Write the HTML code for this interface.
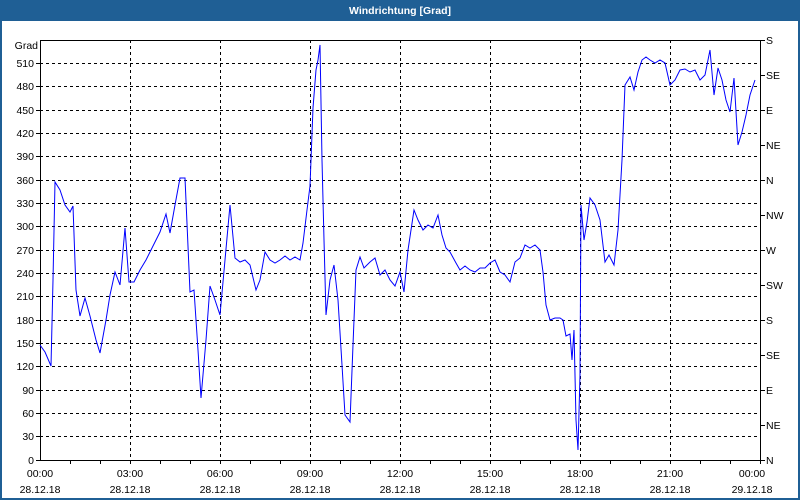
<!DOCTYPE html>
<html><head><style>
body{margin:0;width:800px;height:500px;overflow:hidden;background:#fff;font-family:"Liberation Sans",sans-serif;}
</style></head><body>
<svg width="800" height="500" xmlns="http://www.w3.org/2000/svg" style="display:block;font-family:'Liberation Sans',sans-serif;font-size:10.5px">
<rect x="0" y="0" width="800" height="500" fill="#1f5f95"/>
<rect x="2" y="21" width="796" height="477" fill="#fff"/>
<text x="400" y="14" fill="#fff" font-weight="bold" font-size="10.5" text-anchor="middle">Windrichtung [Grad]</text>
<g stroke="#000" stroke-dasharray="3,3" stroke-width="1">
<line x1="40" x2="760" y1="63.5" y2="63.5"/><line x1="40" x2="760" y1="86.5" y2="86.5"/><line x1="40" x2="760" y1="110.5" y2="110.5"/><line x1="40" x2="760" y1="133.5" y2="133.5"/><line x1="40" x2="760" y1="156.5" y2="156.5"/><line x1="40" x2="760" y1="180.5" y2="180.5"/><line x1="40" x2="760" y1="203.5" y2="203.5"/><line x1="40" x2="760" y1="226.5" y2="226.5"/><line x1="40" x2="760" y1="250.5" y2="250.5"/><line x1="40" x2="760" y1="273.5" y2="273.5"/><line x1="40" x2="760" y1="296.5" y2="296.5"/><line x1="40" x2="760" y1="320.5" y2="320.5"/><line x1="40" x2="760" y1="343.5" y2="343.5"/><line x1="40" x2="760" y1="366.5" y2="366.5"/><line x1="40" x2="760" y1="390.5" y2="390.5"/><line x1="40" x2="760" y1="413.5" y2="413.5"/><line x1="40" x2="760" y1="436.5" y2="436.5"/>
<line x1="130.5" x2="130.5" y1="40" y2="460"/><line x1="220.5" x2="220.5" y1="40" y2="460"/><line x1="310.5" x2="310.5" y1="40" y2="460"/><line x1="400.5" x2="400.5" y1="40" y2="460"/><line x1="490.5" x2="490.5" y1="40" y2="460"/><line x1="580.5" x2="580.5" y1="40" y2="460"/><line x1="670.5" x2="670.5" y1="40" y2="460"/>
</g>
<rect x="40.5" y="40.5" width="720" height="420" fill="none" stroke="#000"/>
<g stroke="#000">
<line x1="36" x2="40" y1="460.5" y2="460.5"/>
<line x1="36" x2="40" y1="63.5" y2="63.5"/><line x1="36" x2="40" y1="86.5" y2="86.5"/><line x1="36" x2="40" y1="110.5" y2="110.5"/><line x1="36" x2="40" y1="133.5" y2="133.5"/><line x1="36" x2="40" y1="156.5" y2="156.5"/><line x1="36" x2="40" y1="180.5" y2="180.5"/><line x1="36" x2="40" y1="203.5" y2="203.5"/><line x1="36" x2="40" y1="226.5" y2="226.5"/><line x1="36" x2="40" y1="250.5" y2="250.5"/><line x1="36" x2="40" y1="273.5" y2="273.5"/><line x1="36" x2="40" y1="296.5" y2="296.5"/><line x1="36" x2="40" y1="320.5" y2="320.5"/><line x1="36" x2="40" y1="343.5" y2="343.5"/><line x1="36" x2="40" y1="366.5" y2="366.5"/><line x1="36" x2="40" y1="390.5" y2="390.5"/><line x1="36" x2="40" y1="413.5" y2="413.5"/><line x1="36" x2="40" y1="436.5" y2="436.5"/>
<line x1="760" x2="765" y1="40.5" y2="40.5"/><line x1="760" x2="765" y1="75.5" y2="75.5"/><line x1="760" x2="765" y1="110.5" y2="110.5"/><line x1="760" x2="765" y1="145.5" y2="145.5"/><line x1="760" x2="765" y1="180.5" y2="180.5"/><line x1="760" x2="765" y1="215.5" y2="215.5"/><line x1="760" x2="765" y1="250.5" y2="250.5"/><line x1="760" x2="765" y1="285.5" y2="285.5"/><line x1="760" x2="765" y1="320.5" y2="320.5"/><line x1="760" x2="765" y1="355.5" y2="355.5"/><line x1="760" x2="765" y1="390.5" y2="390.5"/><line x1="760" x2="765" y1="425.5" y2="425.5"/><line x1="760" x2="765" y1="460.5" y2="460.5"/>
</g>
<g stroke="#000" id="bt">
<line x1="70.5" x2="70.5" y1="460" y2="464"/><line x1="100.5" x2="100.5" y1="460" y2="464"/><line x1="130.5" x2="130.5" y1="460" y2="464"/><line x1="160.5" x2="160.5" y1="460" y2="464"/><line x1="190.5" x2="190.5" y1="460" y2="464"/><line x1="220.5" x2="220.5" y1="460" y2="464"/><line x1="250.5" x2="250.5" y1="460" y2="464"/><line x1="280.5" x2="280.5" y1="460" y2="464"/><line x1="310.5" x2="310.5" y1="460" y2="464"/><line x1="340.5" x2="340.5" y1="460" y2="464"/><line x1="370.5" x2="370.5" y1="460" y2="464"/><line x1="400.5" x2="400.5" y1="460" y2="464"/><line x1="430.5" x2="430.5" y1="460" y2="464"/><line x1="460.5" x2="460.5" y1="460" y2="464"/><line x1="490.5" x2="490.5" y1="460" y2="464"/><line x1="520.5" x2="520.5" y1="460" y2="464"/><line x1="550.5" x2="550.5" y1="460" y2="464"/><line x1="580.5" x2="580.5" y1="460" y2="464"/><line x1="610.5" x2="610.5" y1="460" y2="464"/><line x1="640.5" x2="640.5" y1="460" y2="464"/><line x1="670.5" x2="670.5" y1="460" y2="464"/><line x1="700.5" x2="700.5" y1="460" y2="464"/><line x1="730.5" x2="730.5" y1="460" y2="464"/><line x1="760.5" x2="760.5" y1="460" y2="464"/>
</g>
<g text-anchor="end" fill="#000">
<text x="38" y="49">Grad</text>
<text x="34" y="67">510</text><text x="34" y="90">480</text><text x="34" y="114">450</text><text x="34" y="137">420</text><text x="34" y="160">390</text><text x="34" y="184">360</text><text x="34" y="207">330</text><text x="34" y="230">300</text><text x="34" y="254">270</text><text x="34" y="277">240</text><text x="34" y="300">210</text><text x="34" y="324">180</text><text x="34" y="347">150</text><text x="34" y="370">120</text><text x="34" y="394">90</text><text x="34" y="417">60</text><text x="34" y="440">30</text><text x="34" y="464">0</text>
</g>
<g fill="#000">
<text x="766" y="44">S</text><text x="766" y="79">SE</text><text x="766" y="114">E</text><text x="766" y="149">NE</text><text x="766" y="184">N</text><text x="766" y="219">NW</text><text x="766" y="254">W</text><text x="766" y="289">SW</text><text x="766" y="324">S</text><text x="766" y="359">SE</text><text x="766" y="394">E</text><text x="766" y="429">NE</text><text x="766" y="464">N</text>
</g>
<g text-anchor="middle" fill="#000">
<text x="40" y="477">00:00</text><text x="130" y="477">03:00</text><text x="220" y="477">06:00</text><text x="310" y="477">09:00</text><text x="400" y="477">12:00</text><text x="490" y="477">15:00</text><text x="580" y="477">18:00</text><text x="670" y="477">21:00</text><text x="752" y="477">00:00</text>
<text x="40" y="493">28.12.18</text><text x="130" y="493">28.12.18</text><text x="220" y="493">28.12.18</text><text x="310" y="493">28.12.18</text><text x="400" y="493">28.12.18</text><text x="490" y="493">28.12.18</text><text x="580" y="493">28.12.18</text><text x="670" y="493">28.12.18</text><text x="752" y="493">29.12.18</text>
</g>
<polyline fill="none" stroke="#0000ff" stroke-width="1" points="40,345 45,352 51,366 53,280 55,182 60,190 65,205 70,212 73,206 76,290 80,316 85,298 90,316 96,340 100,353 106,320 110,295 115,272 120,285 125,228 129,282 134,282 140,270 146,260 152,248 160,232 166,214 170,233 175,205 180,178 185,178 190,292 194,290 198,350 201,398 206,340 210,286 215,300 220,315 225,260 230,205 235,258 240,262 245,260 250,265 256,290 260,280 265,252 270,260 275,263 280,260 285,256 290,260 295,257 300,260 303,243 307,210 310,186 313,108 316,70 318,60 320,45 322,160 324,240 326,315 330,280 334,265 338,300 342,365 345,415 350,422 353,345 356,270 360,257 364,268 370,262 375,258 380,275 385,270 390,280 395,286 400,272 404,292 408,250 414,210 418,220 423,230 428,225 433,228 438,215 442,235 446,248 450,252 456,263 460,270 465,266 470,270 475,272 480,268 485,268 490,263 495,260 500,272 505,275 510,282 515,262 520,258 525,245 530,248 535,245 540,250 543,272 546,305 550,320 555,318 560,318 563,320 566,336 570,334 572,360 574,330 576,420 578,450 580,375 581,205 584,240 587,222 590,198 595,205 600,220 605,262 609,255 614,265 618,230 622,160 625,85 630,77 634,90 638,72 642,60 646,57 650,60 655,63 660,60 665,63 670,85 675,80 680,70 685,69 690,72 695,70 700,80 705,75 710,50 714,95 718,68 722,80 726,100 730,112 734,78 738,145 742,132 746,115 750,95 755,80"/>
</svg>
</body></html>
